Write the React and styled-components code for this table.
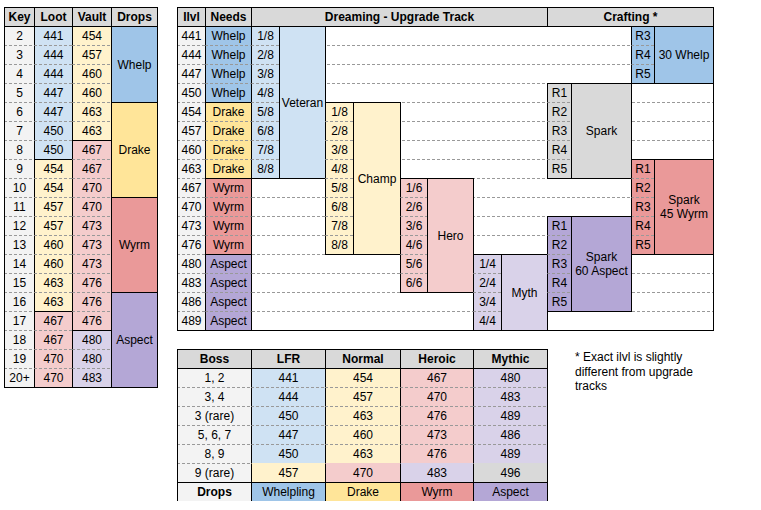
import React from "react";
import styled, { createGlobalStyle } from "styled-components";

const BLUE = "#9fc5e8";
const YELLOW = "#ffe599";
const RED = "#ea9999";
const PURPLE = "#b4a7d6";
const LBLUE = "#cfe2f3";
const LYELLOW = "#fff2cc";
const LRED = "#f4cccc";
const LPURPLE = "#d9d2e9";
const GRAY = "#d9d9d9";
const LGRAY = "#f3f3f3";
const DASH = "#999999";

const GlobalStyle = createGlobalStyle`
  html, body {
    margin: 0;
    padding: 0;
    background: #fff;
  }
  body {
    font-family: "Liberation Sans", Arial, sans-serif;
    font-size: 12px;
    color: #000;
  }
`;

// dashed rule drawn as a 1px background strip, so the dash rhythm is ours
const dash = (pos) =>
  `repeating-linear-gradient(90deg, ${DASH} 0 3px, transparent 3px 5px) ${pos} / 100% 1px no-repeat border-box`;

const edge = (v) => (v === "s" ? "#000" : "transparent");

const cellBackground = ({ $t, $b, $bg }) => {
  const layers = [];
  if ($t === "d") layers.push(dash("top"));
  if ($b === "d") layers.push(dash("bottom"));
  layers.push($bg || "#fff");
  return layers.join(", ");
};

const Page = styled.div`
  display: flex;
  align-items: flex-start;
  gap: 20px;
  padding: 7px 0 0 4px;
`;

const RightColumn = styled.div`
  display: flex;
  flex-direction: column;
  gap: 19px;
`;

const BottomRow = styled.div`
  display: flex;
  align-items: flex-start;
  gap: 28px;
`;

const Sheet = styled.div`
  display: grid;
  flex: none;
  grid-template-columns: ${(p) => p.$cols.map((w) => `${w}px`).join(" ")};
  grid-template-rows: repeat(${(p) => p.$rows}, 19px);
`;

// cells overlap their neighbours by 1px so shared borders collapse
const Cell = styled.div`
  grid-row: ${(p) => p.$r} / span ${(p) => p.$rs || 1};
  grid-column: ${(p) => p.$c} / span ${(p) => p.$cs || 1};
  margin: 0 -1px -1px 0;
  border: 1px solid transparent;
  border-top-color: ${(p) => edge(p.$t)};
  border-bottom-color: ${(p) => edge(p.$b)};
  border-left-color: ${(p) => edge(p.$l || "s")};
  border-right-color: ${(p) => edge(p.$rt || "s")};
  background: ${cellBackground};
  display: flex;
  align-items: center;
  justify-content: center;
  text-align: center;
  white-space: pre-line;
  line-height: 14px;
  font-weight: ${(p) => (p.$bold ? 700 : 400)};
  overflow: visible;
`;

const RowRule = styled.div`
  grid-row: ${(p) => p.$r};
  grid-column: 1 / -1;
  margin-bottom: -1px;
  background: ${dash("bottom")};
`;

const Frame = styled.div`
  grid-row: 1 / -1;
  grid-column: 1 / -1;
  margin: 0 -1px -1px 0;
  border: 1px solid #000;
  pointer-events: none;
`;

const Note = styled.p`
  margin: 0;
  padding-top: 1px;
  width: 135px;
  font-size: 12px;
  line-height: 14.5px;
`;

const stripe = (col, groups, text) =>
  groups.flatMap(([from, to, bg]) => {
    const out = [];
    for (let i = from; i <= to; i++) {
      out.push(
        <Cell
          key={`${col}-${i}`}
          $r={i + 1}
          $c={col}
          $bg={bg}
          $t={i === from ? "s" : "d"}
          $b={i === to ? "s" : "d"}
        >
          {text(i, from)}
        </Cell>
      );
    }
    return out;
  });

const Header = ({ c, cs, children }) => (
  <Cell $r={1} $c={c} $cs={cs} $bg={GRAY} $t="s" $b="s" $bold>
    {children}
  </Cell>
);

const keyRows = [
  ["2", "441", "454"],
  ["3", "444", "457"],
  ["4", "444", "460"],
  ["5", "447", "460"],
  ["6", "447", "463"],
  ["7", "450", "463"],
  ["8", "450", "467"],
  ["9", "454", "467"],
  ["10", "454", "470"],
  ["11", "457", "470"],
  ["12", "457", "473"],
  ["13", "460", "473"],
  ["14", "460", "473"],
  ["15", "463", "476"],
  ["16", "463", "476"],
  ["17", "467", "476"],
  ["18", "467", "480"],
  ["19", "470", "480"],
  ["20+", "470", "483"],
];

const dropGroups = [
  [1, 4, "Whelp", BLUE],
  [5, 9, "Drake", YELLOW],
  [10, 14, "Wyrm", RED],
  [15, 19, "Aspect", PURPLE],
];

const KeyTable = () => (
  <Sheet $cols={[30, 38, 39, 46]} $rows={20}>
    {keyRows.map((_, i) => (
      <RowRule key={`rule-${i}`} $r={i + 2} />
    ))}
    <Header c={1}>Key</Header>
    <Header c={2}>Loot</Header>
    <Header c={3}>Vault</Header>
    <Header c={4}>Drops</Header>
    {stripe(1, [[1, 19, LGRAY]], (i) => keyRows[i - 1][0])}
    {stripe(
      2,
      [
        [1, 7, LBLUE],
        [8, 15, LYELLOW],
        [16, 19, LRED],
      ],
      (i) => keyRows[i - 1][1]
    )}
    {stripe(
      3,
      [
        [1, 6, LYELLOW],
        [7, 16, LRED],
        [17, 19, LPURPLE],
      ],
      (i) => keyRows[i - 1][2]
    )}
    {dropGroups.map(([from, to, name, bg]) => (
      <Cell key={name} $r={from + 1} $rs={to - from + 1} $c={4} $bg={bg} $t="s" $b="s">
        {name}
      </Cell>
    ))}
    <Frame />
  </Sheet>
);

const ilvls = [441, 444, 447, 450, 454, 457, 460, 463, 467, 470, 473, 476, 480, 483, 486, 489];

const needsGroups = [
  [1, 4, BLUE, "Whelp"],
  [5, 8, YELLOW, "Drake"],
  [9, 12, RED, "Wyrm"],
  [13, 16, PURPLE, "Aspect"],
];

const tracks = [
  { col: 3, start: 1, n: 8, name: "Veteran", bg: LBLUE },
  { col: 5, start: 5, n: 8, name: "Champ", bg: LYELLOW },
  { col: 7, start: 9, n: 6, name: "Hero", bg: LRED },
  { col: 9, start: 13, n: 4, name: "Myth", bg: LPURPLE },
];

const crafts = [
  { col: 13, start: 1, ranks: [3, 4, 5], name: "30 Whelp", bg: BLUE },
  { col: 11, start: 4, ranks: [1, 2, 3, 4, 5], name: "Spark", bg: GRAY },
  { col: 13, start: 8, ranks: [1, 2, 3, 4, 5], name: "Spark\n45 Wyrm", bg: RED },
  { col: 11, start: 11, ranks: [1, 2, 3, 4, 5], name: "Spark\n60 Aspect", bg: PURPLE },
];

const TrackTable = () => (
  <Sheet $cols={[28, 46, 28, 46, 28, 47, 27, 46, 28, 46, 24, 60, 23, 59]} $rows={17}>
    {ilvls.map((_, i) => (
      <RowRule key={`rule-${i}`} $r={i + 2} />
    ))}
    <Header c={1}>Ilvl</Header>
    <Header c={2}>Needs</Header>
    <Header c={3} cs={8}>
      Dreaming - Upgrade Track
    </Header>
    <Header c={11} cs={4}>
      Crafting *
    </Header>
    {stripe(1, [[1, 16, LGRAY]], (i) => ilvls[i - 1])}
    {stripe(
      2,
      needsGroups.map(([a, b, bg]) => [a, b, bg]),
      (i) => needsGroups.find(([a, b]) => i >= a && i <= b)[3]
    )}
    {tracks.map((t) => (
      <React.Fragment key={t.name}>
        {stripe(t.col, [[t.start, t.start + t.n - 1, t.bg]], (i) => `${i - t.start + 1}/${t.n}`)}
        <Cell $r={t.start + 1} $rs={t.n} $c={t.col + 1} $bg={t.bg} $t="s" $b="s">
          {t.name}
        </Cell>
      </React.Fragment>
    ))}
    {crafts.map((c) => (
      <React.Fragment key={c.name}>
        {stripe(
          c.col,
          [[c.start, c.start + c.ranks.length - 1, c.bg]],
          (i) => `R${c.ranks[i - c.start]}`
        )}
        <Cell $r={c.start + 1} $rs={c.ranks.length} $c={c.col + 1} $bg={c.bg} $t="s" $b="s">
          {c.name}
        </Cell>
      </React.Fragment>
    ))}
    <Frame />
  </Sheet>
);

const bossRows = [
  ["1, 2", 441, 454, 467, 480],
  ["3, 4", 444, 457, 470, 483],
  ["3 (rare)", 450, 463, 476, 489],
  ["5, 6, 7", 447, 460, 473, 486],
  ["8, 9", 450, 463, 476, 489],
  ["9 (rare)", 457, 470, 483, 496],
];

const bossColors = [
  [LBLUE, LYELLOW],
  [LYELLOW, LRED],
  [LRED, LPURPLE],
  [LPURPLE, GRAY],
];

const bossDrops = [
  ["Whelpling", BLUE],
  ["Drake", YELLOW],
  ["Wyrm", RED],
  ["Aspect", PURPLE],
];

const BossTable = () => (
  <Sheet $cols={[74, 74, 75, 73, 74]} $rows={8}>
    {bossRows.map((_, i) => (
      <RowRule key={`rule-${i}`} $r={i + 2} />
    ))}
    <Header c={1}>Boss</Header>
    <Header c={2}>LFR</Header>
    <Header c={3}>Normal</Header>
    <Header c={4}>Heroic</Header>
    <Header c={5}>Mythic</Header>
    {stripe(1, [[1, 6, LGRAY]], (i) => bossRows[i - 1][0])}
    {bossColors.map(([main, last], k) =>
      bossRows.map((row, i) => {
        const isLast = i === 5;
        return (
          <Cell
            key={`b-${k}-${i}`}
            $r={i + 2}
            $c={k + 2}
            $bg={isLast ? last : main}
            $t={i === 0 ? "s" : isLast ? "n" : "d"}
            $b={isLast ? "s" : i === 4 ? "n" : "d"}
          >
            {row[k + 1]}
          </Cell>
        );
      })
    )}
    <Cell $r={8} $c={1} $bg={LGRAY} $t="s" $b="s" $bold>
      Drops
    </Cell>
    {bossDrops.map(([name, bg], k) => (
      <Cell key={name} $r={8} $c={k + 2} $bg={bg} $t="s" $b="s">
        {name}
      </Cell>
    ))}
    <Frame />
  </Sheet>
);

export default function App() {
  return (
    <>
      <GlobalStyle />
      <Page>
        <KeyTable />
        <RightColumn>
          <TrackTable />
          <BottomRow>
            <BossTable />
            <Note>* Exact ilvl is slightly different from upgrade tracks</Note>
          </BottomRow>
        </RightColumn>
      </Page>
    </>
  );
}
